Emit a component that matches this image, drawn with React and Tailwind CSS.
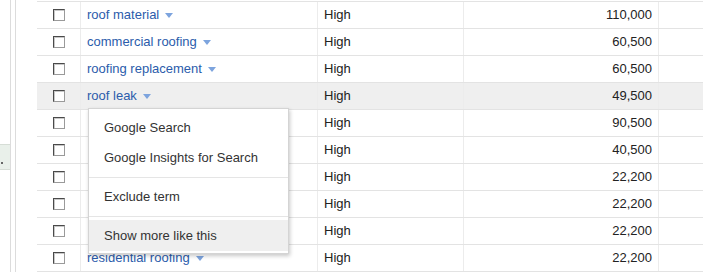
import React from "react";

const rows = [
  { id: 1, kw: "roof material", comp: "High", vol: "110,000" },
  { id: 2, kw: "commercial roofing", comp: "High", vol: "60,500" },
  { id: 3, kw: "roofing replacement", comp: "High", vol: "60,500" },
  { id: 4, kw: "roof leak", comp: "High", vol: "49,500", active: true },
  // rows 5-9 sit under the open menu, so no keyword shows
  { id: 5, kw: "", comp: "High", vol: "90,500" },
  { id: 6, kw: "", comp: "High", vol: "40,500" },
  { id: 7, kw: "", comp: "High", vol: "22,200" },
  { id: 8, kw: "", comp: "High", vol: "22,200" },
  { id: 9, kw: "", comp: "High", vol: "22,200" },
  { id: 10, kw: "residential roofing", comp: "High", vol: "22,200" },
];

function Checkbox() {
  return (
    <div className="w-[12px] h-[12px] bg-white border border-[#9a9a9a] border-t-[#4a4a4a] border-l-[#4a4a4a] shadow-[inset_1px_1px_0_#c8c8c8]" />
  );
}

function Caret() {
  return (
    <svg width="8" height="5" viewBox="0 0 8 5" className="ml-[6px] mt-[1px]">
      <path d="M0 0h8L4 5z" fill="#7da4de" />
    </svg>
  );
}

function Row({ row }) {
  return (
    <div
      className={`flex h-[27px] border-b border-[#e3e3e3] ${
        row.active ? "bg-[#efefef]" : "bg-white"
      }`}
    >
      <div className="w-[44px] flex items-center justify-center pl-[1px] border-r border-[#ececec]">
        <Checkbox />
      </div>
      <div className="w-[237px] flex items-center pl-[6px] text-[#2b5cab] border-r border-[#ececec]">
        {row.kw && (
          <>
            <span>{row.kw}</span>
            <Caret />
          </>
        )}
      </div>
      <div className="w-[146px] flex items-center pl-[6px] text-[#222] border-r border-[#ececec]">
        {row.comp}
      </div>
      <div className="w-[195px] flex items-center justify-end pr-[6px] text-[#222] border-r border-[#ececec]">
        {row.vol}
      </div>
      <div className="flex-1" />
    </div>
  );
}

function ContextMenu() {
  return (
    <div className="absolute left-[88px] top-[108px] w-[201px] bg-white border border-[#d4d4d4] shadow-[1px_2px_4px_rgba(0,0,0,0.22)] pt-[4px] pb-[2px] text-[#333]">
      <div className="h-[30px] flex items-center pl-[15px]">Google Search</div>
      <div className="h-[30px] flex items-center pl-[15px]">Google Insights for Search</div>
      <div className="my-[4px] border-t border-[#e5e5e5]" />
      <div className="h-[30px] flex items-center pl-[15px]">Exclude term</div>
      <div className="mt-[4px] mb-[3px] border-t border-[#e5e5e5]" />
      <div className="h-[31px] flex items-center pl-[15px] bg-[#efefef]">Show more like this</div>
    </div>
  );
}

export default function App() {
  return (
    <div
      className="relative w-[703px] h-[272px] overflow-hidden bg-white flex text-[13px]"
      style={{ fontFamily: '"Liberation Sans", Arial, sans-serif' }}
    >
      <div className="w-[37px] flex shrink-0">
        <div className="w-[11px] border-r border-[#dcdcdc] pt-[144px]">
          <div className="relative h-[26px] bg-[#e9f0ea] border-y border-[#d6ddd6]">
            <div className="absolute left-[1px] top-[17px] w-[2px] h-[2px] bg-[#666]" />
          </div>
        </div>
        <div className="w-[5px] border-r border-[#dcdcdc]" />
      </div>
      <div className="flex-1">
        <div className="h-[2px] border-b border-[#e3e3e3]" />
        {rows.map((row) => (
          <Row key={row.id} row={row} />
        ))}
      </div>
      <ContextMenu />
    </div>
  );
}
